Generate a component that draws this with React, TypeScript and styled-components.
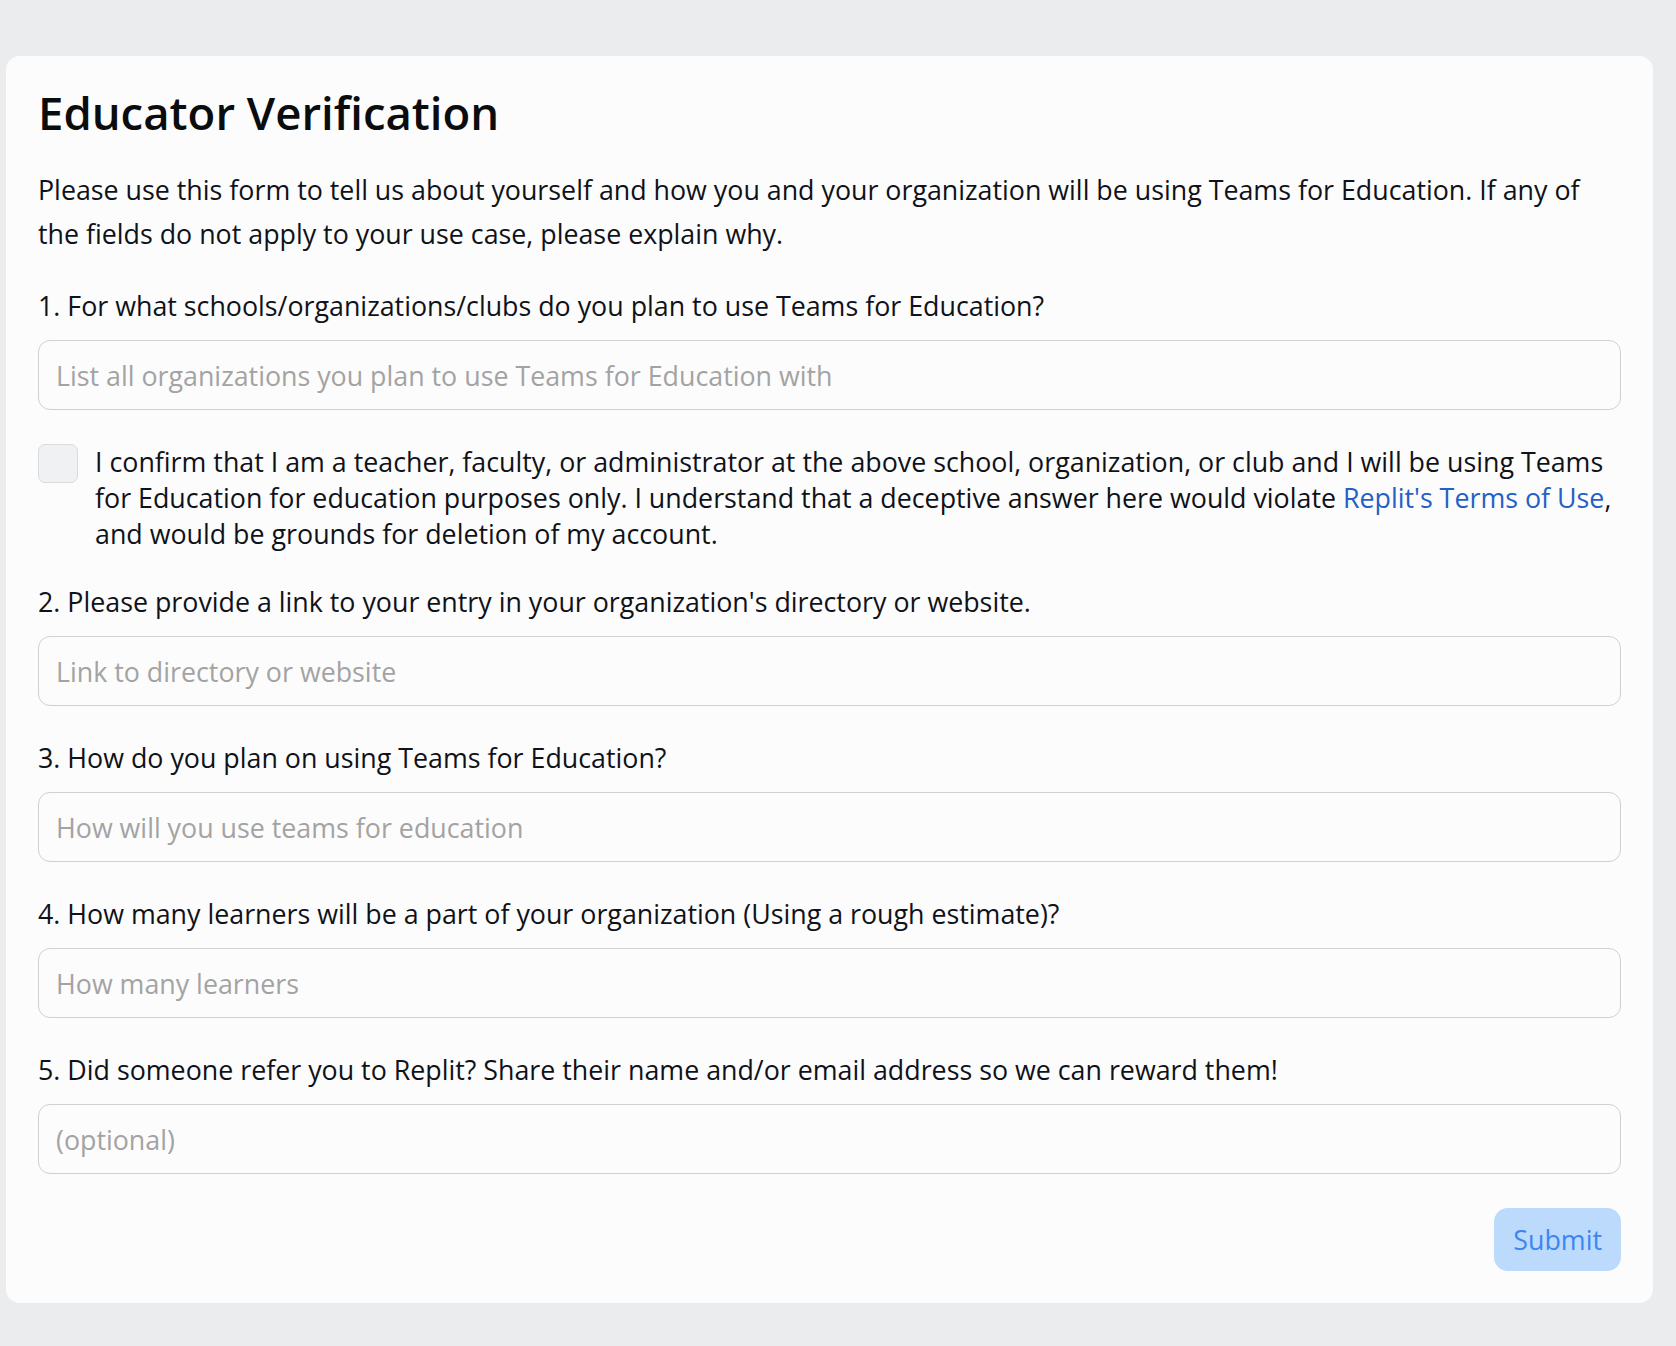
import React from "react";
import styled, { createGlobalStyle } from "styled-components";

const Global = createGlobalStyle`
  html, body { margin: 0; padding: 0; background: #ebecee; }
  body { font-family: "Open Sans", "Noto Sans", sans-serif; color: #0f1218; }
  * { box-sizing: border-box; }
`;

const Page = styled.div`
  min-height: 1346px;
  padding: 56px 23px 43px 6px;
  background: #ebecee;
`;

const Card = styled.form`
  background: #fcfcfc;
  border-radius: 14px;
  padding: 32px;
  display: flex;
  flex-direction: column;
`;

const Title = styled.h1`
  margin: 0;
  font-size: 45.5px;
  line-height: 48px;
  font-weight: 600;
  color: #0b0c0e;
`;

const Intro = styled.p`
  margin: 32px 0 32px;
  font-size: 26.8px;
  line-height: 44px;
`;

const Field = styled.label`
  display: flex;
  flex-direction: column;
  gap: 16px;
  margin-bottom: 34px;
`;

const Question = styled.span`
  font-size: 26.8px;
  line-height: 36px;
`;

const Input = styled.input`
  height: 70px;
  width: 100%;
  border: 1.5px solid #d0d0d0;
  border-radius: 12px;
  background: #fcfcfc;
  padding: 0 17px;
  font: inherit;
  font-size: 26.8px;
  color: #0f1218;
  outline: none;
  &::placeholder { color: #a3a3a3; }
`;

const ConfirmRow = styled.label`
  display: flex;
  align-items: flex-start;
  gap: 17px;
  margin-bottom: 32px;
`;

const Box = styled.input`
  appearance: none;
  flex: 0 0 auto;
  width: 40px;
  height: 39px;
  margin: 0;
  border: 1.5px solid #d9dbdf;
  border-radius: 7px;
  background: #f0f1f3;
`;

const ConfirmText = styled.span`
  font-size: 26.8px;
  line-height: 36px;
`;

const Link = styled.a`
  color: #2460c6;
  text-decoration: none;
`;

const Actions = styled.div`
  display: flex;
  justify-content: flex-end;
`;

const Submit = styled.button`
  height: 63px;
  padding: 0 19px;
  border: none;
  border-radius: 14px;
  background: #bcdafb;
  color: #3a86f4;
  font: inherit;
  font-size: 26.8px;
`;

const questions = [
  {
    q: "2. Please provide a link to your entry in your organization's directory or website.",
    p: "Link to directory or website",
  },
  { q: "3. How do you plan on using Teams for Education?", p: "How will you use teams for education" },
  {
    q: "4. How many learners will be a part of your organization (Using a rough estimate)?",
    p: "How many learners",
  },
  {
    q: "5. Did someone refer you to Replit? Share their name and/or email address so we can reward them!",
    p: "(optional)",
  },
];

export default function App() {
  return (
    <Page>
      <Global />
      <Card onSubmit={(e) => e.preventDefault()}>
        <Title>Educator Verification</Title>
        <Intro>
          Please use this form to tell us about yourself and how you and your organization will be using Teams for
          Education. If any of the fields do not apply to your use case, please explain why.
        </Intro>
        <Field>
          <Question>1. For what schools/organizations/clubs do you plan to use Teams for Education?</Question>
          <Input placeholder="List all organizations you plan to use Teams for Education with" />
        </Field>
        <ConfirmRow>
          <Box type="checkbox" />
          <ConfirmText>
            I confirm that I am a teacher, faculty, or administrator at the above school, organization, or club and I
            will be using Teams for Education for education purposes only. I understand that a deceptive answer here
            would violate <Link href="#">Replit's Terms of Use</Link>, and would be grounds for deletion of my account.
          </ConfirmText>
        </ConfirmRow>
        {questions.map((f) => (
          <Field key={f.q}>
            <Question>{f.q}</Question>
            <Input placeholder={f.p} />
          </Field>
        ))}
        <Actions>
          <Submit type="submit" disabled>
            Submit
          </Submit>
        </Actions>
      </Card>
    </Page>
  );
}
